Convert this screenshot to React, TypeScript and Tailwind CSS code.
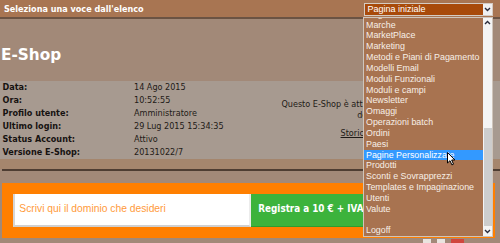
import React from "react";

const rows: [string, string][] = [
  ["Data:", "14 Ago 2015"],
  ["Ora:", "10:52:55"],
  ["Profilo utente:", "Amministratore"],
  ["Ultimo login:", "29 Lug 2015 15:34:35"],
  ["Status Account:", "Attivo"],
  ["Versione E-Shop:", "20131022/7"],
];

const items = [
  "Lingue",
  "Marche",
  "MarketPlace",
  "Marketing",
  "Metodi e Piani di Pagamento",
  "Modelli Email",
  "Moduli Funzionali",
  "Moduli e campi",
  "Newsletter",
  "Omaggi",
  "Operazioni batch",
  "Ordini",
  "Paesi",
  "Pagine Personalizzate",
  "Prodotti",
  "Sconti e Sovrapprezzi",
  "Templates e Impaginazione",
  "Utenti",
  "Valute",
  "",
  "Logoff",
];

function Chevron({ up }: { up?: boolean }) {
  return (
    <svg width="7" height="5" viewBox="0 0 7 5">
      <path
        d={up ? "M1 4 L3.5 1.5 L6 4" : "M1 1 L3.5 3.5 L6 1"}
        fill="none"
        stroke="#2b2b3a"
        strokeWidth="1.4"
      />
    </svg>
  );
}

export default function App() {
  return (
    <div className="relative w-[500px] h-[243px] overflow-hidden bg-[#a28978] font-['DejaVu_Sans_Condensed','DejaVu_Sans',sans-serif]">
      {/* header */}
      <div className="h-[19px] bg-[#a87552] border-b-2 border-[#6b5343] flex">
        <div className="pl-[4px] pt-[4px] text-[9px] leading-[11px] font-bold text-white whitespace-nowrap">
          Seleziona una voce dall'elenco
        </div>
        <div className="ml-auto mr-[7.5px] mt-[2.5px] w-[129px] h-[13.5px] border border-[#d5cbc2] bg-[#a84a0a] flex">
          <div className="flex-1 pl-[3px] font-['Liberation_Sans',Arial,sans-serif] text-[9px] leading-[11px] text-white overflow-hidden">
            Pagina iniziale
          </div>
          <div className="w-[9px] bg-[#f0f0f0] flex items-center justify-center">
            <Chevron />
          </div>
        </div>
      </div>

      {/* title */}
      <div className="pl-[1px] mt-[27px] h-[18px] text-[15.3px] leading-[18px] font-bold text-white font-['DejaVu_Sans',Verdana,sans-serif]">
        E-Shop
      </div>

      {/* info band */}
      <div className="mt-[17px] h-[77.5px] bg-[#a79a90] flex text-[9px]">
        <div className="w-[250px] flex-none pl-[2.5px] -mt-[0.5px]">
          {rows.map(([k, v]) => (
            <div key={k} className="flex h-[13px] leading-[13px] whitespace-nowrap">
              <div className="w-[131.5px] font-bold text-[#161210]">{k}</div>
              <div className="text-[#1f1a17]">{v}</div>
            </div>
          ))}
        </div>
        <div className="flex-1 text-center text-[#1f1a17] pt-[17.7px] leading-[11.4px] whitespace-nowrap">
          <div>Questo E-Shop è attivo fino al giorno 1 Agosto</div>
          <div>del 2016</div>
          <div className="mt-[6.4px]">
            <span className="underline">Storico ordinativi</span>
          </div>
        </div>
      </div>

      {/* tan strip + line */}
      <div className="h-[10px] bg-[#a5866d]" />
      <div className="ml-[2px] h-[2px] bg-[#4e3d32]" />

      {/* orange band */}
      <div className="mt-[12px] ml-[2px] mr-[5px] h-[55px] bg-[#ff7f00] pt-[11.3px] pl-[11.3px] flex">
        <div className="w-[238px] h-[33px] bg-white border-l-2 border-b-2 border-r-2 border-l-[#d6d6d6] border-b-[#d0d0d0] border-r-[#ececec] flex items-center pl-[4px] pb-[1px]">
          <span className="font-['Liberation_Sans',Arial,sans-serif] text-[10.3px] text-[#ff9a3a] whitespace-nowrap">
            Scrivi qui il dominio che desideri
          </span>
        </div>
        <div className="w-[230px] h-[33.5px] bg-[#3cb33c] border-b border-[#2f9c2f] flex items-center pl-[7px] pb-[1px]">
          <span className="font-bold text-[9.8px] text-white whitespace-nowrap">
            Registra a 10 € + IVA
          </span>
        </div>
      </div>

      {/* bits of images below */}
      <div className="ml-[423px] mt-[1px] flex gap-[6px]">
        <div className="w-[8px] h-[6px] bg-[#e9e4df]" />
        <div className="w-[8px] h-[6px] bg-[#e9e4df]" />
        <div className="w-[13px] h-[6px] bg-[#d0473e]" />
      </div>

      {/* open dropdown list (overlay) */}
      <div className="absolute left-[363px] top-[16.5px] w-[130px] h-[220px] border border-[#cfc5bb] bg-[#a87350] flex">
        <div className="flex-1 overflow-hidden">
          <div className="-mt-[8.7px]">
            {items.map((it, i) => (
              <div
                key={i}
                className={
                  "h-[10.83px] leading-[10.83px] pl-[2px] text-[8.9px] whitespace-nowrap font-['Liberation_Sans',Arial,sans-serif] " +
                  (it === "Pagine Personalizzate"
                    ? "bg-[#3399ff] text-white"
                    : "text-[#f7efe7]")
                }
              >
                {it}
              </div>
            ))}
          </div>
        </div>
        <div className="w-[9px] bg-[#f4f4f4] flex flex-col">
          <div className="h-[10px] flex items-center justify-center">
            <Chevron up />
          </div>
          <div className="flex-1">
            <div className="mt-[100.2px] ml-[1px] h-[98px] bg-[#cdcdcd]" />
          </div>
          <div className="h-[9px] flex items-center justify-center">
            <Chevron />
          </div>
        </div>
      </div>

      {/* mouse cursor */}
      <svg
        className="absolute left-[447px] top-[152px]"
        width="9"
        height="14"
        viewBox="0 0 9 14"
      >
        <path
          d="M0.5 0.5 L0.5 11 L3 8.7 L4.9 12.9 L6.5 12.2 L4.7 8 L7.9 8 Z"
          fill="white"
          stroke="black"
          strokeWidth="1"
          strokeLinejoin="round"
        />
      </svg>
    </div>
  );
}
